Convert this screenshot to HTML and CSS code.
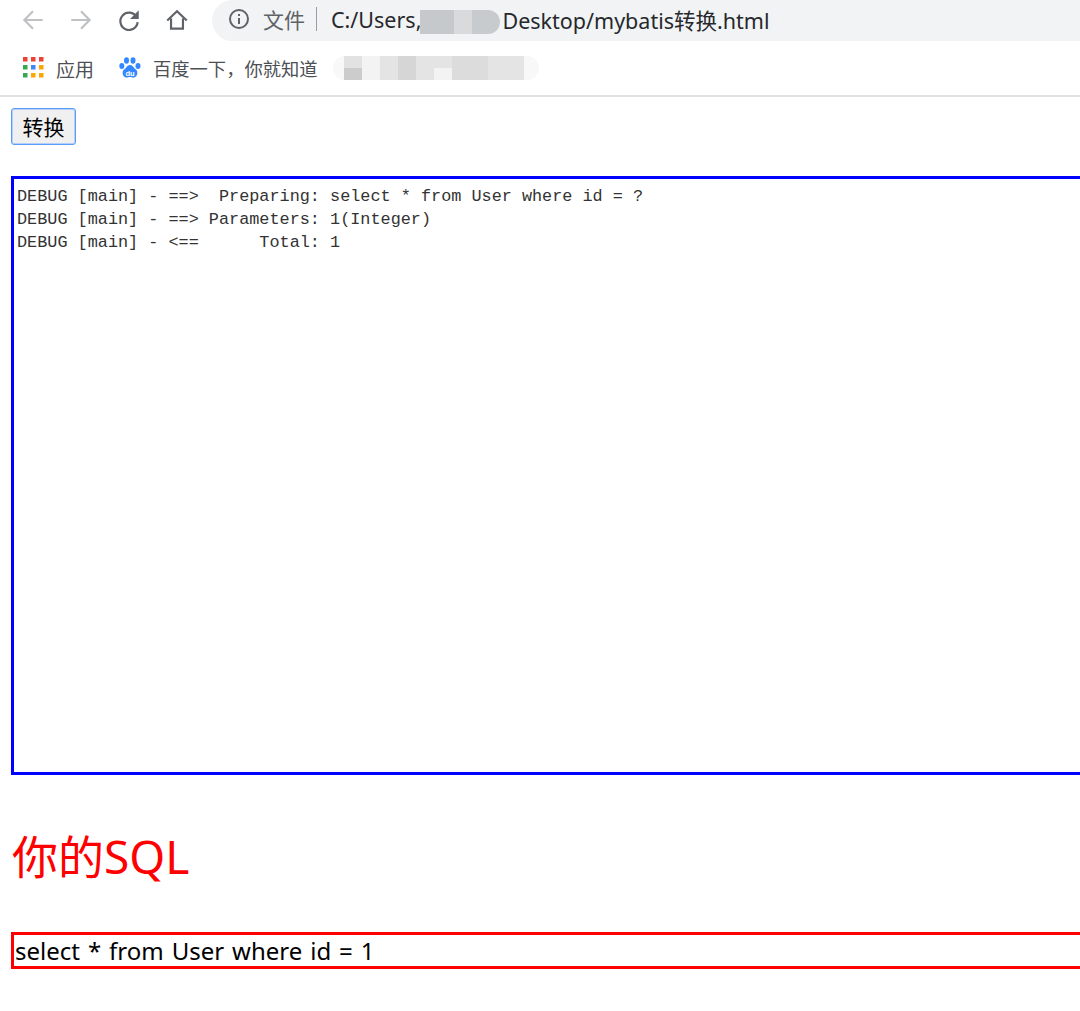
FILE: index.html
```html
<!DOCTYPE html>
<html lang="zh">
<head>
<meta charset="utf-8">
<title>mybatis转换</title>
<link rel="stylesheet" href="styles.css">
</head>
<body>
<header class="chrome">
  <div class="toolbar">
    <nav class="nav-icons">
      <svg class="nav-icon" viewBox="0 0 24 24"><path class="stroke-dim" d="M21 12H4M12 4l-8 8 8 8"/></svg>
      <svg class="nav-icon" viewBox="0 0 24 24"><path class="stroke-dim" d="M3 12h17M12 4l8 8-8 8"/></svg>
      <svg class="nav-icon" viewBox="0 0 24 24"><path class="stroke-dark" d="M19 9.2A8 8 0 1 0 20 14"/><path class="fill-dark" d="M21 3v8h-8z"/></svg>
      <svg class="nav-icon" viewBox="0 0 24 24"><path class="stroke-dark" d="M3 12.500 12 4l9 8.500M6.500 10.500V20h11v-9.500"/></svg>
    </nav>
    <div class="omnibox">
      <svg class="info" viewBox="0 0 22 22"><circle class="info-ring" cx="11" cy="11" r="9"/><path class="fill-dark" d="M10 10h2v6h-2zM10 6h2v2h-2z"/></svg>
      <span class="scheme">文件</span>
      <span class="sep"></span>
      <span class="url">C:/Users,</span>
      <span class="url-blur"><i class="b1"></i><i class="b2"></i><i class="b3"></i></span>
      <span class="url">Desktop/mybatis转换.html</span>
    </div>
  </div>
  <div class="bookmarks">
    <span class="bookmark">
      <svg class="apps" viewBox="0 0 21 21">
        <rect class="r" x="0" y="0" width="4.500" height="4.500"/><rect class="r" x="8" y="0" width="4.500" height="4.500"/><rect class="r" x="16" y="0" width="4.500" height="4.500"/>
        <rect class="g" x="0" y="8" width="4.500" height="4.500"/><rect class="b" x="8" y="8" width="4.500" height="4.500"/><rect class="y" x="16" y="8" width="4.500" height="4.500"/>
        <rect class="g" x="0" y="16" width="4.500" height="4.500"/><rect class="y" x="8" y="16" width="4.500" height="4.500"/><rect class="y" x="16" y="16" width="4.500" height="4.500"/>
      </svg>
      应用
    </span>
    <span class="bookmark baidu">
      <svg class="paw" viewBox="0 0 22 22">
        <ellipse class="blue" cx="2.800" cy="9" rx="2.500" ry="3"/><ellipse class="blue" cx="7.500" cy="3.500" rx="2.500" ry="3.200"/><ellipse class="blue" cx="14" cy="3.500" rx="2.500" ry="3.200"/><ellipse class="blue" cx="19" cy="9" rx="2.500" ry="3"/>
        <path class="blue" d="M11 8c3 0 3.500 3 6 4.500 2.500 2 1.500 8-2.500 8-1.500 0-2.500-.5-3.500-.5s-2 .5-3.500.5c-4 0-5-6-2.500-8C7.500 11 8 8 11 8z"/>
        <text class="du" x="11" y="18.500">du</text>
      </svg>
      百度一下，你就知道
    </span>
    <span class="mosaic">
      <span class="mosaic-col"><i class="m1"></i><i class="m4"></i></span>
      <span class="mosaic-col"><i class="m6"></i><i class="m6"></i></span>
      <span class="mosaic-col"><i class="m2"></i><i class="m2"></i></span>
      <span class="mosaic-col"><i class="m5"></i><i class="m5"></i></span>
      <span class="mosaic-col"><i class="m2"></i><i class="m2"></i></span>
      <span class="mosaic-col"><i class="m2"></i><i class="m6"></i></span>
      <span class="mosaic-col"><i class="m3"></i><i class="m3"></i></span>
      <span class="mosaic-col"><i class="m3"></i><i class="m3"></i></span>
      <span class="mosaic-col"><i class="m2"></i><i class="m2"></i></span>
      <span class="mosaic-col"><i class="m2"></i><i class="m2"></i></span>
    </span>
  </div>
</header>
<main class="page">
  <button class="convert" type="button">转换</button>
  <pre class="log">DEBUG [main] - ==&gt;  Preparing: select * from User where id = ?
DEBUG [main] - ==&gt; Parameters: 1(Integer)
DEBUG [main] - &lt;==      Total: 1</pre>
  <h1 class="title">你的SQL</h1>
  <div class="result">select * from User where id = 1</div>
</main>
</body>
</html>
```

FILE: styles.css
```css
* { box-sizing: border-box; }
html, body { margin: 0; height: 100%; overflow: hidden; background: #fff; }
body { font-family: "Noto Sans", "Noto Sans CJK SC", sans-serif; color: #000; width: 1080px; height: 1011px; }

.chrome { height: 97px; border-bottom: 2px solid #e0e1e4; display: flex; flex-direction: column; }
.toolbar { height: 41px; display: flex; align-items: center; }
.nav-icons { display: flex; align-items: center; gap: 22px; padding: 0 0 2px 20px; width: 212px; }
.nav-icon { width: 26px; height: 26px; flex: none; }
.stroke-dim, .stroke-dark { fill: none; stroke-width: 2; }
.stroke-dim { stroke: #bfc1c4; }
.stroke-dark { stroke: #5f6368; }
.fill-dark { fill: #5f6368; }

.omnibox { flex: 1; height: 41px; background: #f1f3f4; border-radius: 21px 0 0 21px; display: flex; align-items: center; padding: 0 0 3px 16px; font-size: 21.500px; color: #26282c; white-space: nowrap; }
.info { width: 22px; height: 22px; flex: none; }
.info-ring { fill: none; stroke: #5f6368; stroke-width: 2; }
.scheme { margin-left: 13px; color: #5f6368; font-size: 21px; font-family: "Noto Sans CJK SC", sans-serif; }
.sep { width: 1px; height: 24px; background: #9a9da1; margin: 0 14px 0 11px; }
.url { font-family: "Noto Sans", "Noto Sans CJK SC", sans-serif; }
.url-blur { display: flex; width: 84px; height: 24px; margin-top: 6px; margin-left: -3px; padding-left: 2px; }
.url-blur i { height: 100%; }
.url-blur .b1 { width: 34px; background: #c6c9cb; }
.url-blur .b2 { width: 18px; background: #d8dadb; }
.url-blur .b3 { width: 28px; background: #c8cbcd; border-radius: 0 12px 12px 0; }

.bookmarks { flex: 1; display: flex; align-items: center; padding-left: 23px; font-size: 19px; color: #4d5054; font-family: "Noto Sans CJK SC", sans-serif; }
.bookmark { display: flex; align-items: center; white-space: nowrap; }
.apps { width: 21px; height: 21px; margin-right: 12px; margin-top: -2px; }
.r { fill: #ea4335; } .g { fill: #34a853; } .b { fill: #4285f4; } .y { fill: #fba703; }
.baidu { margin-left: 25px; font-size: 18.300px; }
.paw { width: 22px; height: 22px; margin-right: 12px; margin-top: -1px; }
.blue { fill: #3388ff; }
.du { fill: #fff; font-size: 7.500px; font-weight: 700; text-anchor: middle; font-family: "Liberation Sans", sans-serif; }
.mosaic { display: flex; margin-left: 15px; height: 24px; padding: 0 15px 0 11px; border-radius: 12px; background: #f8f8f8; }
.mosaic-col { display: flex; flex-direction: column; width: 18px; }
.mosaic-col i { flex: 1; }
.m1 { background: #e2e2e2; } .m2 { background: #e4e4e5; } .m3 { background: #dcdcdd; } .m4 { background: #cccccc; } .m5 { background: #d6d6d7; } .m6 { background: #f3f3f3; }

.page { padding: 11px 0 0 11px; width: 1300px; }
.convert { display: block; width: 65px; height: 37px; padding: 0 0 2px; font: 21px "Noto Sans CJK SC", sans-serif; color: #000; background: #f0f0f0; border: 1px solid #5b9cf8; border-radius: 3px; box-shadow: inset 0 0 0 1px #b5cff8; }
.log { margin: 31px 0 0; width: 1200px; height: 599px; border: 3px solid #0000ff; padding: 6px 3px 0; font: 16.830px/23px "Liberation Mono", monospace; color: #333; }
.title { margin: 55px 0 0 1px; height: 52px; font-weight: 400; font-size: 46px; line-height: 52px; color: #ff0000; font-family: "Noto Sans", "Noto Sans CJK SC", sans-serif; }
.result { margin-top: 50px; width: 1200px; height: 37px; border: 3px solid #ff0000; padding-left: 1px; font-size: 24px; word-spacing: 1.700px; line-height: 32px; white-space: nowrap; }
```
